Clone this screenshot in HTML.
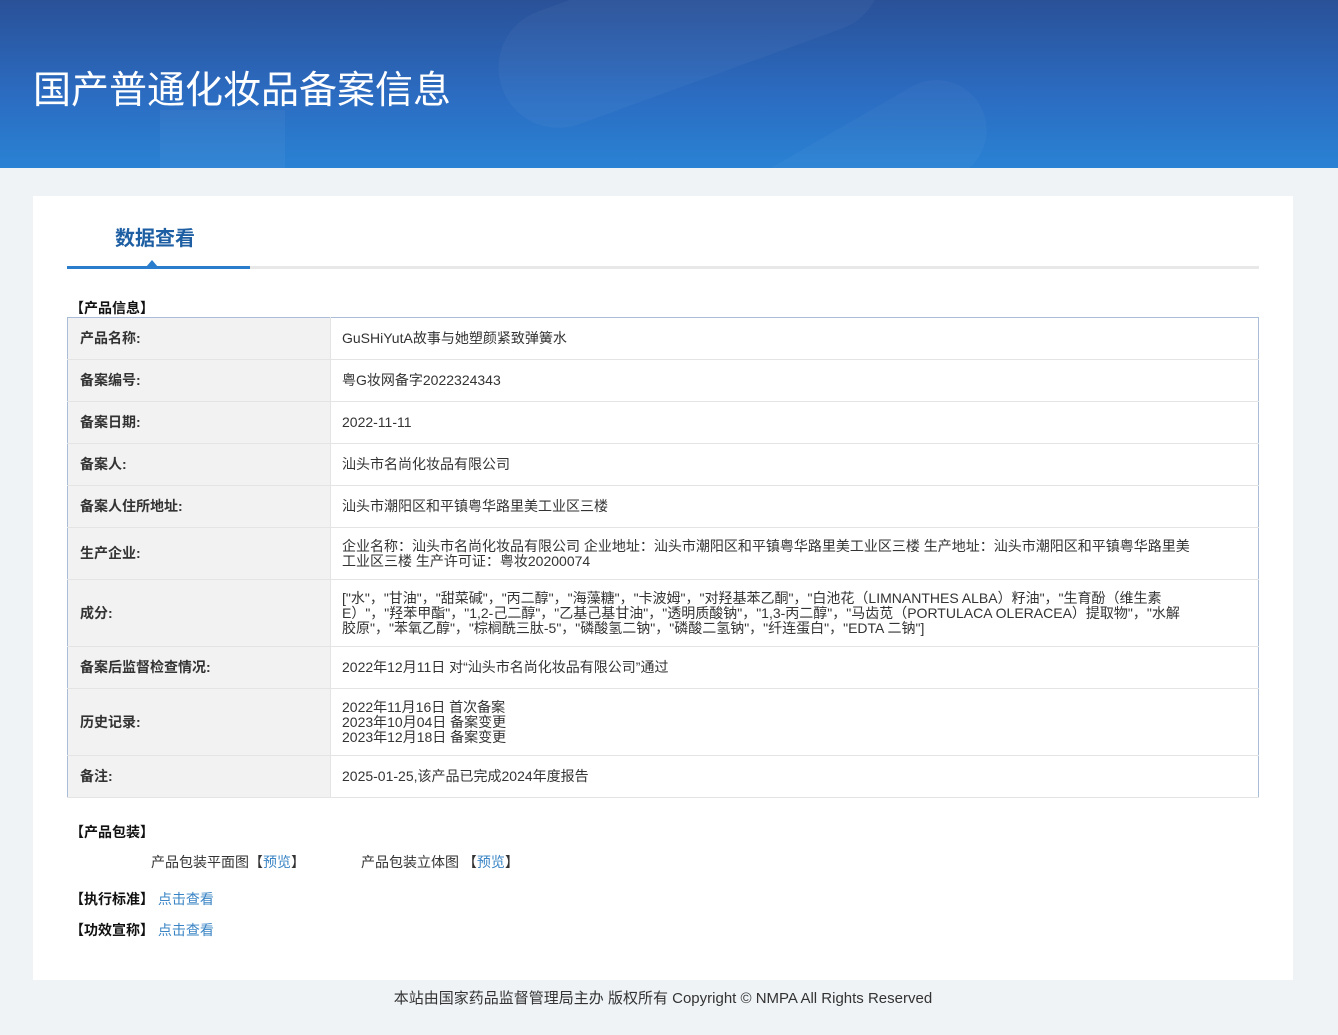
<!DOCTYPE html>
<html><head><meta charset="utf-8"><style>
*{margin:0;padding:0;box-sizing:border-box}
body{width:1338px;height:1035px;background:#eff3f6;font-family:"Liberation Sans","Noto Sans CJK SC",sans-serif;color:#333;position:relative;overflow:hidden}
.hd{position:absolute;left:0;top:0;width:1338px;height:168px;background:linear-gradient(180deg,#2a5198 0%,#2b6bc0 55%,#2a82d4 100%);overflow:hidden}
.hd .s1{position:absolute;left:490px;top:-40px;width:400px;height:120px;border-radius:60px;background:rgba(255,255,255,.035);transform:rotate(-20deg)}
.hd .s2{position:absolute;left:160px;top:110px;width:125px;height:80px;background:rgba(255,255,255,.04)}
.hd .s3{position:absolute;left:700px;top:130px;width:300px;height:100px;border-radius:50px;background:rgba(255,255,255,.03);transform:rotate(-30deg)}
.hd h1{position:absolute;left:33px;top:66px;font-size:38px;font-weight:normal;color:#fff;line-height:50px}
.box{position:absolute;left:33px;top:196px;width:1260px;height:784px;background:#fff}
.tab{position:absolute;left:82px;top:26px;font-size:20px;font-weight:bold;color:#1e5fa3}
.line{position:absolute;left:34px;top:70px;width:1192px;height:3px;background:#e8e8e8}
.line2{position:absolute;left:34px;top:70px;width:183px;height:3px;background:#2a7dcc}
.tri{position:absolute;left:113px;top:64px;width:0;height:0;border-left:6px solid transparent;border-right:6px solid transparent;border-bottom:7px solid #2a7dcc}
.sec{position:absolute;left:37px;font-size:14px;font-weight:bold;color:#111}
table{position:absolute;left:34px;top:121px;width:1192px;border-collapse:collapse;border:1px solid #a9bdd8;font-size:14px}
td{border-bottom:1px solid #e4e4e4;line-height:15px}
td.l{width:263px;background:#f2f2f2;font-weight:bold;padding-left:12px;border-right:1px solid #e4e4e4}
td.v{padding:0 65px 0 11px}
a{color:#3a84c5;text-decoration:none}
.ft{position:absolute;top:987px;left:0;width:1326px;text-align:center;font-size:15px;color:#333}
</style></head><body>
<div class="hd"><div class="s1"></div><div class="s2"></div><div class="s3"></div><h1>国产普通化妆品备案信息</h1></div>
<div class="box">
<div class="tab">数据查看</div>
<div class="line"></div><div class="line2"></div><div class="tri"></div>
<div class="sec" style="top:102px">【产品信息】</div>
<table>
<tr style="height:42px"><td class="l">产品名称:</td><td class="v">GuSHiYutA故事与她塑颜紧致弹簧水</td></tr>
<tr style="height:42px"><td class="l">备案编号:</td><td class="v">粤G妆网备字2022324343</td></tr>
<tr style="height:42px"><td class="l">备案日期:</td><td class="v">2022-11-11</td></tr>
<tr style="height:42px"><td class="l">备案人:</td><td class="v">汕头市名尚化妆品有限公司</td></tr>
<tr style="height:42px"><td class="l">备案人住所地址:</td><td class="v">汕头市潮阳区和平镇粤华路里美工业区三楼</td></tr>
<tr style="height:52px"><td class="l">生产企业:</td><td class="v">企业名称：汕头市名尚化妆品有限公司 企业地址：汕头市潮阳区和平镇粤华路里美工业区三楼 生产地址：汕头市潮阳区和平镇粤华路里美工业区三楼 生产许可证：粤妆20200074</td></tr>
<tr style="height:67px"><td class="l">成分:</td><td class="v">["水"，"甘油"，"甜菜碱"，"丙二醇"，"海藻糖"，"卡波姆"，"对羟基苯乙酮"，"白池花（LIMNANTHES ALBA）籽油"，"生育酚（维生素E）"，"羟苯甲酯"，"1,2-己二醇"，"乙基己基甘油"，"透明质酸钠"，"1,3-丙二醇"，"马齿苋（PORTULACA OLERACEA）提取物"，"水解胶原"，"苯氧乙醇"，"棕榈酰三肽-5"，"磷酸氢二钠"，"磷酸二氢钠"，"纤连蛋白"，"EDTA 二钠"]</td></tr>
<tr style="height:42px"><td class="l">备案后监督检查情况:</td><td class="v">2022年12月11日 对“汕头市名尚化妆品有限公司”通过</td></tr>
<tr style="height:67px"><td class="l">历史记录:</td><td class="v">2022年11月16日 首次备案<br>2023年10月04日 备案变更<br>2023年12月18日 备案变更</td></tr>
<tr style="height:42px"><td class="l">备注:</td><td class="v">2025-01-25,该产品已完成2024年度报告</td></tr>
</table>
<div class="sec" style="top:626px">【产品包装】</div>
<div style="position:absolute;left:118px;top:656px;font-size:14px">产品包装平面图【<a>预览</a>】</div>
<div style="position:absolute;left:328px;top:656px;font-size:14px">产品包装立体图 【<a>预览</a>】</div>
<div class="sec" style="top:693px">【执行标准】 <a style="font-weight:normal">点击查看</a></div>
<div class="sec" style="top:724px">【功效宣称】 <a style="font-weight:normal">点击查看</a></div>
</div>
<div class="ft">本站由国家药品监督管理局主办 版权所有 Copyright © NMPA All Rights Reserved</div>
</body></html>
